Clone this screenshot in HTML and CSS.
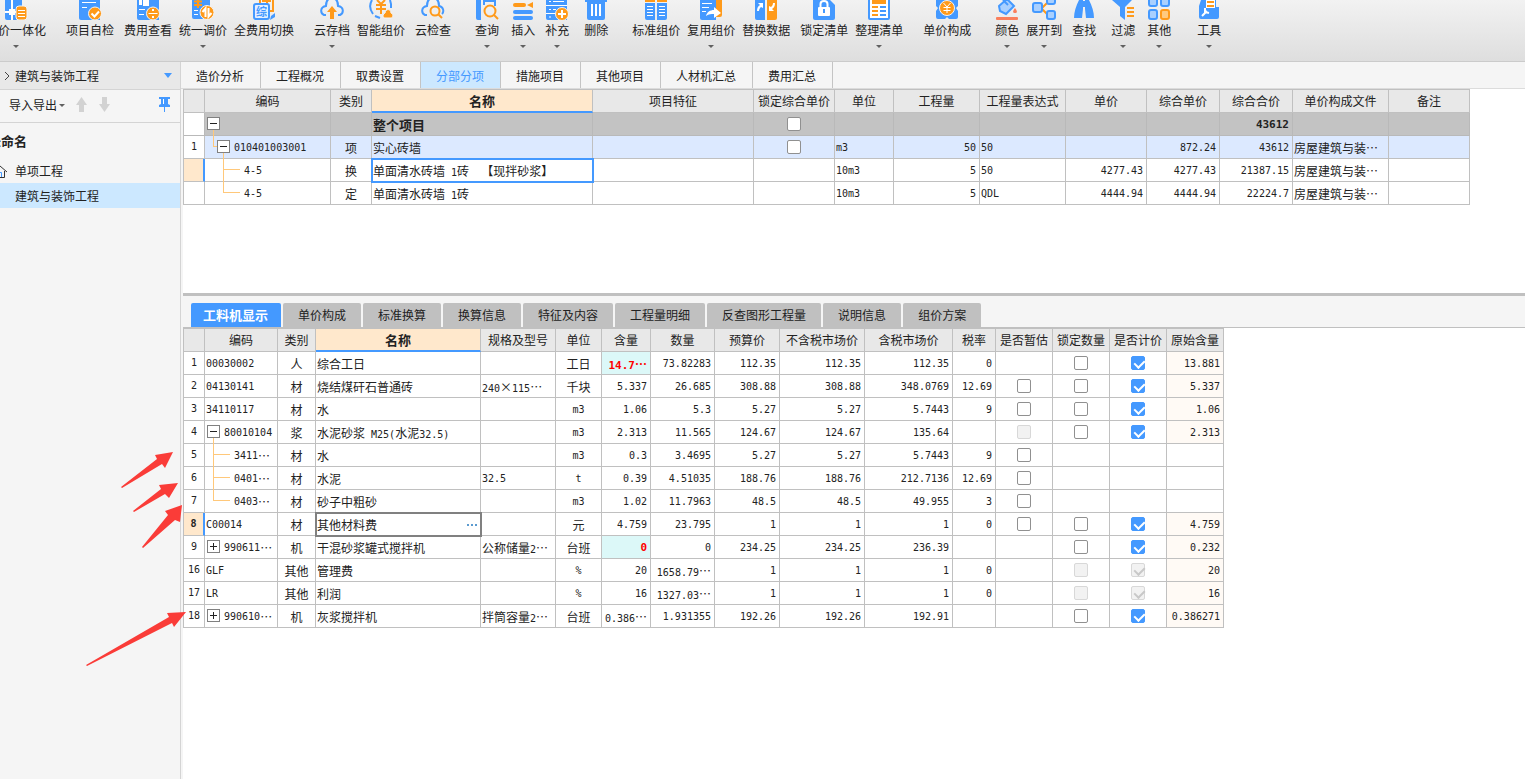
FILE: index.html
```html
<!DOCTYPE html>
<html lang="zh-CN">
<head>
<meta charset="utf-8">
<title>建筑与装饰工程</title>
<link rel="stylesheet" href="styles.css">
</head>
<body>
<svg class="defs" aria-hidden="true">
  <symbol id="t-root" viewBox="0 0 19 23"><path class="guide" d="M8.5 17v6"/><path class="box" d="M2.5 4.5h12v12h-12z"/><path class="sign" d="M5 10.5h7"/></symbol>
  <symbol id="t-sub" viewBox="0 0 29 23"><path class="guide" d="M8.5 0v10.5H12M18.5 17v6"/><path class="box" d="M12.5 4.5h12v12h-12z"/><path class="sign" d="M15 10.5h7"/></symbol>
  <symbol id="t-plus" viewBox="0 0 19 23"><path class="box" d="M2.5 4.5h12v12h-12z"/><path class="sign" d="M5 10.5h7M8.5 7v7"/></symbol>
  <symbol id="g-mid" viewBox="0 0 29 23"><path class="guide" d="M8.5 0v23M8.5 10.5H25"/></symbol>
  <symbol id="g-end" viewBox="0 0 29 23"><path class="guide" d="M8.5 0v10.5H25"/></symbol>
  <symbol id="g-mid2" viewBox="0 0 39 23"><path class="guide" d="M18.5 0v23M18.5 10.5H35"/></symbol>
  <symbol id="g-end2" viewBox="0 0 39 23"><path class="guide" d="M18.5 0v10.5H35"/></symbol>
</svg>

<header class="ribbon">
  <button class="tool first"><svg viewBox="0 0 24 20"><path class="b" d="M1 0h17v20H3a2 2 0 0 1-2-2z"/><path class="w" d="M5 9h6v6H5zM7 0h2v9H7zM7 15h2v5H7zM1 11h4v2H1zM11 11h2v2h-2z"/><rect class="o ring" x="12" y="6" width="11" height="14" rx="3"/><path class="ws" d="M14 10.5h7M14 13.5h7M14 16.5h7"/></svg><span>价一体化</span><i></i></button>
  <button class="tool g20"><svg viewBox="0 0 24 20"><path class="b" d="M1 0h21v20H3a2 2 0 0 1-2-2z"/><path class="ws" d="M4 2.500h14M4 7.500h5"/><circle class="o ring" cx="17" cy="13.500" r="6.500"/><path class="ws2" d="M13.500 13.500l3 3 4.500-5"/></svg><span>项目自检</span></button>
  <button class="tool g10"><svg viewBox="0 0 24 20"><path class="b" d="M1 0h22v20H3a2 2 0 0 1-2-2z"/><path class="w" d="M3 0h3v5H3zM7 0h6v6H7z"/><path class="ws" d="M3 9.500h6M3 14.500h5"/><circle class="o ring" cx="17" cy="13.500" r="6.500"/><path class="ws" d="M12.500 13.500h9"/><path class="w" d="M16 9h2v2h-2zM16 16h2v2h-2z"/></svg><span>费用查看</span></button>
  <button class="tool g7"><svg viewBox="0 0 24 20"><path class="b" d="M1 0h18v19H3a2 2 0 0 1-2-2z"/><path class="os" d="M3 1.500h8M3 5h8M7 0v8"/><path class="ws" d="M3 10.500h4M3 14.500h4"/><circle class="o ring" cx="16" cy="12.500" r="7"/><path class="ws2" d="M14.500 17V8.500l-3 3.500M17.500 8v8.500l3-3.500"/></svg><span>统一调价</span><i></i></button>
  <button class="tool g7"><svg viewBox="0 0 24 20"><path class="os" d="M8 3V0M21 0v11h-3M10 1h9M15 0v4"/><rect class="pale bs" x="2" y="4" width="15" height="15" rx="2"/><text class="glyph" x="4" y="16">综</text><path class="b" d="M18 20l1-4 4-3v4z"/></svg><span>全费用切换</span></button>
  <button class="tool g20"><svg viewBox="0 0 24 20"><path class="bs" d="M6 15H4c-4-2-4-8 2-9C6 0 9-2 12-2s6 2 6 8c6 1 6 7 2 9h-2"/><path class="o" d="M12 6l5 6h-3v7h-4v-7H7z"/></svg><span>云存档</span><i></i></button>
  <button class="tool g7"><svg viewBox="0 0 24 20"><path class="bs" d="M3 0C0 5 1 10 4 14M6 16l5 2M21 0l1 4v4"/><path class="os" d="M8 0l4 4 4-4M7 5h10M7 9h10M12 4v10"/><path class="o ring" d="M15 18a3 3 0 0 1 1-5c1-5 6-4 6 0 3 1 2 5 0 5z"/></svg><span>智能组价</span></button>
  <button class="tool g10"><svg viewBox="0 0 24 20"><path class="bs" d="M6 15H4c-4-2-4-8 2-9C6 0 9-2 12-2s6 2 6 8c5 1 5 6 3 8"/><circle class="os" cx="14" cy="11" r="4.500"/><path class="os" d="M17 14l4 4"/></svg><span>云检查</span></button>
  <button class="tool g24"><svg viewBox="0 0 24 20"><path class="b" d="M1 0h5v20H3a2 2 0 0 1-2-2zM8 0h13v6h-2V2h-9v3H8z"/><circle class="os" cx="15" cy="11" r="5.500"/><path class="os" d="M19 15l4 4"/></svg><span>查询</span><i></i></button>
  <button class="tool g12"><svg viewBox="0 0 24 20"><rect class="o" x="2" y="3" width="13" height="4" rx="2"/><path class="o" d="M16 5l6-3v6z"/><rect class="b" x="2" y="10" width="20" height="4" rx="2"/><rect class="b" x="2" y="16" width="20" height="4" rx="2"/></svg><span>插入</span><i></i></button>
  <button class="tool g10"><svg viewBox="0 0 24 20"><path class="b" d="M1 0h21v20H3a2 2 0 0 1-2-2z"/><path class="ws" d="M4 1.500h2M8 1.500h11M1 5.500h21M4 9.500h2M8 9.500h3M1 13.500h9M4 17h2"/><circle class="o ring" cx="17" cy="14" r="6.500"/><path class="ws2" d="M17 10v8M13 14h8"/></svg><span>补充</span><i></i></button>
  <button class="tool g15"><svg viewBox="0 0 24 20"><path class="b" d="M1 0h22v2H1zM3 2h18v16a2 2 0 0 1-2 2H5a2 2 0 0 1-2-2z"/><path class="w" d="M7 4h2v12H7zM11 4h2v12h-2zM15 4h2v12h-2z"/></svg><span>删除</span></button>
  <button class="tool g24"><svg viewBox="0 0 24 20"><path class="b" d="M1 3h10v17H3a2 2 0 0 1-2-2zM13 3h10v15a2 2 0 0 1-2 2h-8z"/><path class="o" d="M1 0h10v2H1zM13 0h10v2H13z"/><path class="ws" d="M3 6.500h6M3 9.500h6M3 12.500h6M3 15.500h6M15 6.500h6M15 9.500h6M15 12.500h6M15 15.500h6"/></svg><span>标准组价</span></button>
  <button class="tool g7"><svg viewBox="0 0 24 20"><path class="o" d="M12 0h11v15a2 2 0 0 1-2 2h-9z"/><path class="b" d="M1 0h16v20H3a2 2 0 0 1-2-2z"/><path class="ws" d="M3 3.500h10M3 7.500h7M3 11.500h4"/><path class="w" d="M7 16c1-4 4-6 8-6V7l7 6-7 5v-4c-3 0-5 0-8 2z"/></svg><span>复用组价</span><i></i></button>
  <button class="tool g7"><svg viewBox="0 0 24 20"><path class="b" d="M1 0h10v20H3a2 2 0 0 1-2-2z"/><path class="o" d="M13 0h10v18a2 2 0 0 1-2 2h-8z"/><path class="w" d="M3 11c0-3 1-5 3-6L4 3h5v5L7 7c-1 1-2 2-2 4zM21 3c0 3-1 5-3 6l2 2h-5V6l2 1c1-1 2-2 2-4z"/></svg><span>替换数据</span></button>
  <button class="tool g10"><svg viewBox="0 0 24 20"><path class="b" d="M1 0h17l5 5v13a2 2 0 0 1-2 2H3a2 2 0 0 1-2-2z"/><path class="ws2" d="M8.500 8V4c0-4 7-4 7 0v4"/><rect class="w" x="6" y="7" width="12" height="9" rx="1"/><path class="b" d="M11 9h2v4h-2z"/></svg><span>锁定清单</span></button>
  <button class="tool g7"><svg viewBox="0 0 24 20"><path class="b" d="M1 0h22v18a2 2 0 0 1-2 2H3a2 2 0 0 1-2-2z"/><path class="w" d="M3 0h18v18H3z"/><path class="o" d="M5 0h14v4H5zM5 6h6v2H5zM5 10h6v2H5zM5 14h6v2H5z"/><path class="b" d="M13 6h6v2h-6zM13 10h6v2h-6zM13 14h6v2h-6z"/></svg><span>整理清单</span><i></i></button>
  <button class="tool g20"><svg viewBox="0 0 24 20"><path class="b" d="M1 0h22v6l-2 2 2 3v6a2 2 0 0 1-2 2h-7l-2-2-2 2H3a2 2 0 0 1-2-2v-6l2-3-2-2z"/><circle class="o ring" cx="12" cy="8" r="7.500"/><path class="ws" d="M8.500 3l3.500 4 3.500-4M8.500 7.500h7M8.500 10.500h7M12 7v6"/></svg><span>单价构成</span></button>
  <button class="tool g24"><svg viewBox="0 0 24 20"><path class="light bs" d="M4 6l8-7 7 7-8 8-6-3z"/><path class="bs" d="M8 0l5 5"/><path class="r" d="M20 8c3 4 2 5 0 5s-3-1 0-5z"/><rect class="r" x="1" y="17" width="22" height="3" rx="1"/></svg><span>颜色</span><i></i></button>
  <button class="tool g7"><svg viewBox="0 0 24 20"><path class="os" d="M10 8l5-5M10 9l5 5"/><rect class="light bs" x="1" y="3" width="9" height="9" rx="2"/><rect class="light bs" x="15" y="-3" width="8" height="7" rx="2"/><rect class="light bs" x="15" y="11" width="8" height="8" rx="2"/></svg><span>展开到</span><i></i></button>
  <button class="tool g10"><svg viewBox="0 0 24 20"><path class="b" d="M7 0h4v9l-1 9H2c0-6 2-12 5-18zM13 0h4c3 6 5 12 5 18h-8l-1-9zM11 1h2v6h-2z"/></svg><span>查找</span></button>
  <button class="tool g15"><svg viewBox="0 0 24 20"><path class="b" d="M1 0h20l-7 7v13l-5-4V7z"/><path class="os" d="M16 8h7M16 12h7M16 16h7"/></svg><span>过滤</span><i></i></button>
  <button class="tool g12"><svg viewBox="0 0 24 20"><rect class="light bs" x="2" y="-3" width="8" height="9" rx="2"/><rect class="light bs" x="14" y="-3" width="8" height="9" rx="2"/><rect class="light bs" x="2" y="10" width="8" height="9" rx="2"/><rect class="lo os" x="14" y="10" width="8" height="9" rx="2"/></svg><span>其他</span><i></i></button>
  <button class="tool g25"><svg viewBox="0 0 24 20"><path class="b" d="M4 0h15v7h3v10a2 2 0 0 1-2 2H4a2 2 0 0 1-2-2V6z"/><path class="w" d="M9 0h9v8H9z"/><path class="os" d="M10 2h7M10 6h7"/><path class="ws2" d="M5 16l5-5M8 8v4l4 1"/></svg><span>工具</span><i></i></button>
</header>

<div class="workspace">
  <aside class="sidebar">
    <div class="crumb"><svg class="chev" viewBox="0 0 6 10"><path d="M1 1l4 4-4 4"/></svg><span>建筑与装饰工程</span><i class="caret blue"></i></div>
    <div class="actions">
      <button class="plain">导入导出<i class="caret"></i></button>
      <button class="plain" aria-label="上移"><svg width="13" height="16" viewBox="0 0 13 16"><path class="dim" d="M6.500 0L12 8H9v7H4V8H1z"/></svg></button>
      <button class="plain" aria-label="下移"><svg width="13" height="16" viewBox="0 0 13 16"><path class="dim" d="M6.500 15L12 7H9V0H4v7H1z"/></svg></button>
      <button class="plain pin" aria-label="固定"><svg width="13" height="16" viewBox="0 0 13 16"><path class="b" d="M1 0h11v2h-2v5l2 1v2H7v5H6v-5H1V8l2-1V2H1z"/><path class="ws" d="M5.500 2v5"/></svg></button>
    </div>
    <nav class="projects">
      <a class="root" href="#">未命名</a>
      <a href="#"><svg class="home" viewBox="0 0 16 14"><path class="roof" d="M1 8l7-6 7 6M3.500 7v6.500h9V7"/><path class="door" d="M6.500 13V8.500h3V13"/></svg>单项工程</a>
      <a class="current" href="#">建筑与装饰工程</a>
    </nav>
  </aside>

  <main class="content">
    <nav class="tabs">
      <a href="#">造价分析</a><a href="#">工程概况</a><a href="#">取费设置</a><a class="on" href="#">分部分项</a><a href="#">措施项目</a><a href="#">其他项目</a><a href="#">人材机汇总</a><a href="#">费用汇总</a>
    </nav>

    <section class="upper">
      <table class="grid items">
        <colgroup><col class="w21"><col class="w126"><col class="w41"><col class="w221"><col class="w161"><col class="w81"><col class="w59"><col class="w86"><col class="w86"><col class="w81"><col class="w73"><col class="w73"><col class="w96"><col class="w81"></colgroup>
        <thead><tr><th></th><th>编码</th><th>类别</th><th class="sorted">名称</th><th>项目特征</th><th>锁定综合单价</th><th>单位</th><th>工程量</th><th>工程量表达式</th><th>单价</th><th>综合单价</th><th>综合合价</th><th>单价构成文件</th><th>备注</th></tr></thead>
        <tbody>
          <tr class="total"><td class="no"></td><td class="code"><div><button class="toggle" aria-label="折叠"><svg class="s19"><use href="#t-root"/></svg></button></div></td><td></td><td>整个项目</td><td></td><td class="c"><input type="checkbox" aria-label="锁定综合单价"></td><td></td><td></td><td></td><td></td><td></td><td class="num">43612</td><td></td><td></td></tr>
          <tr class="bill"><td class="no">1</td><td class="code"><div><button class="toggle" aria-label="折叠"><svg class="s29"><use href="#t-sub"/></svg></button><span class="n">010401003001</span></div></td><td class="c">项</td><td>实心砖墙</td><td></td><td class="c"><input type="checkbox" aria-label="锁定综合单价"></td><td class="lat">m3</td><td class="num">50</td><td class="lat">50</td><td></td><td class="num">872.24</td><td class="num">43612</td><td>房屋建筑与装…</td><td></td></tr>
          <tr><td class="no active"></td><td class="code"><div><svg class="s39"><use href="#g-mid2"/></svg><span class="n">4-5</span></div></td><td class="c">换</td><td class="focus">单面清水砖墙<span class="n"> 1</span>砖<span class="n">&nbsp; </span>【现拌砂浆】</td><td></td><td></td><td class="lat">10m3</td><td class="num">5</td><td class="lat">50</td><td class="num">4277.43</td><td class="num">4277.43</td><td class="num">21387.15</td><td>房屋建筑与装…</td><td></td></tr>
          <tr><td class="no"></td><td class="code"><div><svg class="s39"><use href="#g-end2"/></svg><span class="n">4-5</span></div></td><td class="c">定</td><td>单面清水砖墙<span class="n"> 1</span>砖</td><td></td><td></td><td class="lat">10m3</td><td class="num">5</td><td class="lat">QDL</td><td class="num">4444.94</td><td class="num">4444.94</td><td class="num">22224.7</td><td>房屋建筑与装…</td><td></td></tr>
        </tbody>
      </table>
    </section>

    <nav class="subtabs">
      <a class="on" href="#">工料机显示</a><a href="#">单价构成</a><a href="#">标准换算</a><a href="#">换算信息</a><a href="#">特征及内容</a><a href="#">工程量明细</a><a href="#">反查图形工程量</a><a href="#">说明信息</a><a href="#">组价方案</a>
    </nav>

    <section class="lower">
      <table class="grid resources">
        <colgroup><col class="w21"><col class="w73"><col class="w38"><col class="w165"><col class="w75"><col class="w46"><col class="w49"><col class="w64"><col class="w65"><col class="w85"><col class="w88"><col class="w43"><col class="w57"><col class="w57"><col class="w57"><col class="w57"></colgroup>
        <thead><tr><th></th><th>编码</th><th>类别</th><th class="sorted">名称</th><th>规格及型号</th><th>单位</th><th>含量</th><th>数量</th><th>预算价</th><th>不含税市场价</th><th>含税市场价</th><th>税率</th><th>是否暂估</th><th>锁定数量</th><th>是否计价</th><th>原始含量</th></tr></thead>
        <tbody>
          <tr><td class="no">1</td><td class="lat">00030002</td><td class="c">人</td><td>综合工日</td><td></td><td class="c">工日</td><td class="r changed"><span class="n">14.7</span>…</td><td class="num">73.82283</td><td class="num">112.35</td><td class="num">112.35</td><td class="num">112.35</td><td class="num">0</td><td></td><td class="c"><input type="checkbox" aria-label="锁定数量"></td><td class="c"><input type="checkbox" aria-label="是否计价" checked></td><td class="num orig">13.881</td></tr>
          <tr><td class="no">2</td><td class="lat">04130141</td><td class="c">材</td><td>烧结煤矸石普通砖</td><td><span class="n">240</span><span class="wide">×</span><span class="n">115</span>…</td><td class="c">千块</td><td class="num">5.337</td><td class="num">26.685</td><td class="num">308.88</td><td class="num">308.88</td><td class="num">348.0769</td><td class="num">12.69</td><td class="c"><input type="checkbox" aria-label="是否暂估"></td><td class="c"><input type="checkbox" aria-label="锁定数量"></td><td class="c"><input type="checkbox" aria-label="是否计价" checked></td><td class="num orig">5.337</td></tr>
          <tr><td class="no">3</td><td class="lat">34110117</td><td class="c">材</td><td>水</td><td></td><td class="c lat">m3</td><td class="num">1.06</td><td class="num">5.3</td><td class="num">5.27</td><td class="num">5.27</td><td class="num">5.7443</td><td class="num">9</td><td class="c"><input type="checkbox" aria-label="是否暂估"></td><td class="c"><input type="checkbox" aria-label="锁定数量"></td><td class="c"><input type="checkbox" aria-label="是否计价" checked></td><td class="num orig">1.06</td></tr>
          <tr><td class="no">4</td><td class="code"><div><button class="toggle" aria-label="折叠"><svg class="s19"><use href="#t-root"/></svg></button><span class="n">80010104</span></div></td><td class="c">浆</td><td>水泥砂浆<span class="n"> M25(</span>水泥<span class="n">32.5)</span></td><td></td><td class="c lat">m3</td><td class="num">2.313</td><td class="num">11.565</td><td class="num">124.67</td><td class="num">124.67</td><td class="num">135.64</td><td></td><td class="c"><input type="checkbox" aria-label="是否暂估" disabled></td><td class="c"><input type="checkbox" aria-label="锁定数量"></td><td class="c"><input type="checkbox" aria-label="是否计价" checked></td><td class="num orig">2.313</td></tr>
          <tr><td class="no">5</td><td class="code"><div><svg class="s29"><use href="#g-mid"/></svg><span class="n">3411</span>…</div></td><td class="c">材</td><td>水</td><td></td><td class="c lat">m3</td><td class="num">0.3</td><td class="num">3.4695</td><td class="num">5.27</td><td class="num">5.27</td><td class="num">5.7443</td><td class="num">9</td><td class="c"><input type="checkbox" aria-label="是否暂估"></td><td></td><td></td><td></td></tr>
          <tr><td class="no">6</td><td class="code"><div><svg class="s29"><use href="#g-mid"/></svg><span class="n">0401</span>…</div></td><td class="c">材</td><td>水泥</td><td class="lat">32.5</td><td class="c lat">t</td><td class="num">0.39</td><td class="num">4.51035</td><td class="num">188.76</td><td class="num">188.76</td><td class="num">212.7136</td><td class="num">12.69</td><td class="c"><input type="checkbox" aria-label="是否暂估"></td><td></td><td></td><td></td></tr>
          <tr><td class="no">7</td><td class="code"><div><svg class="s29"><use href="#g-end"/></svg><span class="n">0403</span>…</div></td><td class="c">材</td><td>砂子中粗砂</td><td></td><td class="c lat">m3</td><td class="num">1.02</td><td class="num">11.7963</td><td class="num">48.5</td><td class="num">48.5</td><td class="num">49.955</td><td class="num">3</td><td class="c"><input type="checkbox" aria-label="是否暂估"></td><td></td><td></td><td></td></tr>
          <tr><td class="no active">8</td><td class="lat">C00014</td><td class="c">材</td><td class="editing"><div><span>其他材料费</span><button class="more" aria-label="更多"><b></b><b></b><b></b></button></div></td><td></td><td class="c">元</td><td class="num">4.759</td><td class="num">23.795</td><td class="num">1</td><td class="num">1</td><td class="num">1</td><td class="num">0</td><td class="c"><input type="checkbox" aria-label="是否暂估"></td><td class="c"><input type="checkbox" aria-label="锁定数量"></td><td class="c"><input type="checkbox" aria-label="是否计价" checked></td><td class="num orig">4.759</td></tr>
          <tr><td class="no">9</td><td class="code"><div><button class="toggle" aria-label="展开"><svg class="s19"><use href="#t-plus"/></svg></button><span class="n">990611</span>…</div></td><td class="c">机</td><td>干混砂浆罐式搅拌机</td><td>公称储量<span class="n">2</span>…</td><td class="c">台班</td><td class="num changed">0</td><td class="num">0</td><td class="num">234.25</td><td class="num">234.25</td><td class="num">236.39</td><td></td><td></td><td class="c"><input type="checkbox" aria-label="锁定数量"></td><td class="c"><input type="checkbox" aria-label="是否计价" checked></td><td class="num orig">0.232</td></tr>
          <tr><td class="no">16</td><td class="lat">GLF</td><td class="c">其他</td><td>管理费</td><td></td><td class="c lat">%</td><td class="num">20</td><td class="r"><span class="n">1658.79</span>…</td><td class="num">1</td><td class="num">1</td><td class="num">1</td><td class="num">0</td><td></td><td class="c"><input type="checkbox" aria-label="锁定数量" disabled></td><td class="c"><input type="checkbox" aria-label="是否计价" checked disabled></td><td class="num orig">20</td></tr>
          <tr><td class="no">17</td><td class="lat">LR</td><td class="c">其他</td><td>利润</td><td></td><td class="c lat">%</td><td class="num">16</td><td class="r"><span class="n">1327.03</span>…</td><td class="num">1</td><td class="num">1</td><td class="num">1</td><td class="num">0</td><td></td><td class="c"><input type="checkbox" aria-label="锁定数量" disabled></td><td class="c"><input type="checkbox" aria-label="是否计价" checked disabled></td><td class="num orig">16</td></tr>
          <tr><td class="no">18</td><td class="code"><div><button class="toggle" aria-label="展开"><svg class="s19"><use href="#t-plus"/></svg></button><span class="n">990610</span>…</div></td><td class="c">机</td><td>灰浆搅拌机</td><td>拌筒容量<span class="n">2</span>…</td><td class="c">台班</td><td class="r"><span class="n">0.386</span>…</td><td class="num">1.931355</td><td class="num">192.26</td><td class="num">192.26</td><td class="num">192.91</td><td></td><td></td><td class="c"><input type="checkbox" aria-label="锁定数量"></td><td class="c"><input type="checkbox" aria-label="是否计价" checked></td><td class="num orig">0.386271</td></tr>
        </tbody>
      </table>
    </section>
  </main>
</div>

<svg class="marks" viewBox="0 0 200 240" aria-hidden="true">
  <path d="M121 47L157 19l-2-4 18-3-8 16-3-4-40 24zM133 71l28-22-2-4 19-2-9 15-4-4-31 18zM142 107l26-32-3-4 17-6-2 17-5-2-32 28zM86 225l83-48-2-4 19-1-12 15-2-4-85 43z"/>
</svg>
</body>
</html>
```
FILE: styles.css
```css
* { box-sizing: border-box; }

body {
  margin: 0;
  min-height: 100vh;
  display: flex;
  flex-direction: column;
  overflow: hidden;
  background: #fff;
  color: #222;
  font: 12px/16px "Noto Sans CJK SC", sans-serif;
}

a { color: inherit; text-decoration: none; }

button {
  margin: 0;
  padding: 0;
  border: 0;
  background: none;
  color: inherit;
  font: inherit;
}

.defs { position: absolute; width: 0; height: 0; }

/* icon paint */
.b { fill: #4499ff; }
.o { fill: #ff9a1a; }
.r { fill: #fa7f5c; }
.w { fill: #fff; }
.bs, .os, .ws, .ws2 { fill: none; stroke-width: 2; }
.bs { stroke: #4499ff; }
.os { stroke: #ff9a1a; }
.ws { stroke: #fff; stroke-width: 1; }
.ws2 { stroke: #fff; }
.light { fill: #a9d0ff; }
.pale { fill: #e4f0ff; }
.lo { fill: #ffca80; }
.ring { stroke: #f4f4f4; stroke-width: 1; }
.glyph { fill: #4499ff; font-size: 11px; font-weight: 700; }
.dim { fill: #d2d2d2; }

/* ribbon */
.ribbon {
  display: flex;
  align-items: flex-start;
  flex: none;
  height: 62px;
  overflow: hidden;
  background: linear-gradient(#f2f2f2, #dedede);
  border-bottom: 1px solid #cbcbcb;
}
.tool {
  display: flex;
  flex-direction: column;
  align-items: center;
  flex: none;
  white-space: nowrap;
}
.tool svg { width: 24px; height: 20px; }
.tool span { margin-top: 2px; }
.tool i { margin-top: 7px; }
.tool i, .caret {
  width: 0;
  height: 0;
  border: 3px solid transparent;
  border-top-color: #606060;
  border-bottom: 0;
}
.first { width: 60px; margin-left: -14px; }
.first span { align-self: flex-end; }
.g7 { margin-left: 7px; }
.g10 { margin-left: 10px; }
.g12 { margin-left: 12px; }
.g15 { margin-left: 15px; }
.g20 { margin-left: 20px; }
.g24 { margin-left: 24px; }
.g25 { margin-left: 26px; }

.workspace { display: flex; flex: 1; }

/* sidebar */
.sidebar {
  flex: none;
  width: 181px;
  background: #f5f5f5;
  border-right: 1px solid #d4d4d4;
}
.crumb {
  display: flex;
  align-items: center;
  height: 28px;
  padding: 0 8px 0 4px;
  background: #e8e8e8;
  border-bottom: 1px solid #d4d4d4;
}
.chev { width: 6px; height: 10px; margin-right: 5px; }
.chev path { fill: none; stroke: #444; }
.caret.blue { margin-left: auto; border-width: 5px 4px 0; border-top-color: #4499ff; }
.actions {
  display: flex;
  align-items: center;
  height: 33px;
  padding: 0 9px 2px;
  border-bottom: 1px solid #d4d4d4;
}
.plain { display: flex; align-items: center; }
.plain .caret { margin-left: 2px; }
.plain + .plain { margin-left: 10px; }
.actions .pin { margin-left: auto; }
.projects { display: flex; flex-direction: column; padding-top: 6px; }
.projects a {
  display: flex;
  align-items: center;
  height: 25px;
  padding-left: 15px;
}
.projects .root {
  height: 29px;
  padding: 0 0 6px;
  margin: 0 0 0 -12px;
  font-size: 13px;
  font-weight: 700;
}
.home { width: 16px; height: 14px; margin: 0 7px 0 -23px; }
.roof { fill: none; stroke: #333; }
.door { fill: none; stroke: #4499ff; }
.projects .current { background: #cce8ff; }

/* main area */
.content { flex: 1; min-width: 0; padding-left: 2px; background: #f5f5f5; }
.tabs {
  display: flex;
  height: 27px;
  margin-left: -2px;
  border-bottom: 1px solid #dcdcdc;
}
.tabs a {
  padding: 0 16px 0 15px;
  line-height: 28px;
  border-right: 1px solid #c4c4c4;
}
.tabs .on { background: #cce8ff; color: #4499ff; }

.upper { height: 207px; background: #fff; border-bottom: 3px solid #c0c0c0; }
.lower { height: 452px; background: #fff; }

.subtabs {
  display: flex;
  align-items: flex-end;
  gap: 2px;
  height: 32px;
  padding-left: 8px;
  border-bottom: 1px solid #c0c0c0;
}
.subtabs a {
  padding: 0 15px;
  line-height: 24px;
  border-radius: 2px 2px 0 0;
  background: #c0c0c0;
}
.subtabs .on {
  padding: 0 13px 0 12px;
  background: #4499ff;
  color: #fff;
  font-size: 13px;
  font-weight: 700;
}

/* grids */
.grid {
  table-layout: fixed;
  border-collapse: separate;
  border-spacing: 0;
  border-top: 1px solid #c0c0c0;
  border-left: 1px solid #c0c0c0;
  background: #fff;
}
.items { width: 1287px; }
.resources { width: 1041px; }
.w21 { width: 21px; }
.w38 { width: 38px; }
.w41 { width: 41px; }
.w43 { width: 43px; }
.w46 { width: 46px; }
.w49 { width: 49px; }
.w57 { width: 57px; }
.w59 { width: 59px; }
.w64 { width: 64px; }
.w65 { width: 65px; }
.w73 { width: 73px; }
.w75 { width: 75px; }
.w81 { width: 81px; }
.w85 { width: 85px; }
.w86 { width: 86px; }
.w88 { width: 88px; }
.w96 { width: 96px; }
.w126 { width: 126px; }
.w161 { width: 161px; }
.w165 { width: 165px; }
.w221 { width: 221px; }

.grid th, .grid td {
  height: 23px;
  padding: 0;
  border-right: 1px solid #c0c0c0;
  border-bottom: 1px solid #c0c0c0;
  white-space: nowrap;
  line-height: 16px;
}
.grid th { background: #e8e8e8; font-weight: 400; }
.grid .sorted {
  background: #ffe8cc;
  border-bottom: 2px solid #4499ff;
  font-size: 13px;
  font-weight: 700;
}
.grid td { padding: 2px 3px 0 1px; }
.grid .num, .grid .r { text-align: right; }
.grid .c { padding: 2px 0 0; text-align: center; }
.grid .num, .grid .lat, .grid .no, .n {
  font-family: "DejaVu Sans Mono", "Liberation Mono", monospace;
  font-size: 10px;
}
.n { line-height: 12px; white-space: pre; }
.grid .no { padding: 0; text-align: center; background: #fff; }
.grid .active {
  background: #ffe8cc;
  border-right: 2px solid #4499ff;
  font-weight: 700;
}
.wide { display: inline-block; width: 12px; text-align: center; }

.total td { background: #c3c3c3; border-color: #b9b9b9; font-weight: 700; }
.total td:nth-child(4) { font-size: 13px; }
.bill td { background: #dce9ff; }
.grid .focus { outline: 2px solid #4499ff; outline-offset: -1px; }
.grid .editing { outline: 2px solid #808080; outline-offset: -1px; }
.editing div { display: flex; align-items: center; justify-content: space-between; }
.more { display: flex; gap: 2px; }
.more b { width: 2px; height: 2px; background: #5b9bd0; }
.grid .changed { background: #dcf8f8; color: #f00; font-weight: 700; }
.grid .total .num, .grid .num.changed, .changed .n { font-size: 11px; }
.grid .orig { background: #fffaf5; }

.grid .code { padding: 0; }
.code div { display: flex; align-items: center; height: 22px; padding-top: 2px; }
.code svg { display: block; height: 23px; margin: -2px 0 -1px; flex: none; }
.toggle { display: block; }
.s19 { width: 19px; }
.s29 { width: 29px; }
.s39 { width: 39px; }
.guide { fill: none; stroke: #ffc87a; }
.box { fill: #fff; stroke: #808080; }
.sign { fill: none; stroke: #222; }
.guide, .box, .sign { shape-rendering: crispEdges; }

input[type="checkbox"] {
  appearance: none;
  display: block;
  position: relative;
  width: 14px;
  height: 14px;
  margin: -2px auto 0;
  border: 1px solid #909090;
  border-radius: 2px;
  background: #fff;
}
input[type="checkbox"]:checked { background: #4499ff; border-color: #4499ff; }
input[type="checkbox"]:checked::after {
  content: "";
  position: absolute;
  left: 4px;
  top: 1px;
  width: 5px;
  height: 8px;
  border: solid #fff;
  border-width: 0 2px 2px 0;
  transform: rotate(45deg);
}
input[type="checkbox"]:disabled { background: #f2f2f2; border-color: #d8d8d8; }
input[type="checkbox"]:disabled::after { border-color: #c8c8c8; }

/* hand-drawn arrows lying over the workspace */
.marks {
  position: absolute;
  left: 0;
  top: 440px;
  width: 200px;
  height: 240px;
  pointer-events: none;
}
.marks path { fill: #fa3c38; }
```
